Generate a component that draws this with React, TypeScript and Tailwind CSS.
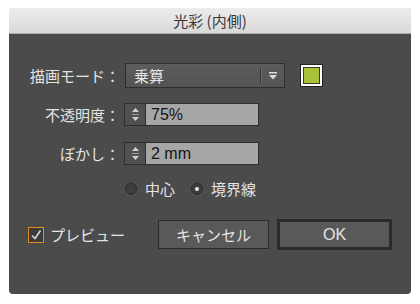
import React, { useState } from 'react';

const jp = { fontFamily: '"Noto Sans CJK JP", "Noto Sans", sans-serif' };
const latin = { fontFamily: '"Liberation Sans", "Noto Sans CJK JP", sans-serif' };

const Spinner: React.FC = () => (
    <div className="w-[21px] h-full flex flex-col items-center justify-center bg-[#505050] border-r border-[#2e2e2e]">
        <svg width="9" height="15" viewBox="0 0 9 15">
            <polygon points="4.5,1 8,5 1,5" fill="#d0d0d0" />
            <line x1="1" y1="7.5" x2="8" y2="7.5" stroke="#9a9a9a" strokeWidth="1" />
            <polygon points="1,10 8,10 4.5,14" fill="#d0d0d0" />
        </svg>
    </div>
);

const NumberField: React.FC<{ value: string }> = ({ value }) => (
    <div className="flex h-[23px] w-[135px] border border-[#2e2e2e] bg-[#a6a6a6]">
        <Spinner />
        <div className="flex-1 flex items-center pl-[5px] text-[16px] text-[#141414]" style={latin}>
            {value}
        </div>
    </div>
);

const Radio: React.FC<{ checked?: boolean; label: string }> = ({ checked, label }) => (
    <div className="flex items-center gap-[8px]">
        <div className="w-[12px] h-[12px] rounded-full bg-[#3e3e3e] border border-[#2a2a2a] flex items-center justify-center shadow-[0_1px_0_#5a5a5a]">
            {checked && <div className="w-[4px] h-[4px] rounded-full bg-[#e6e6e6]" />}
        </div>
        <span className="text-[15px] text-[#e4e4e4] leading-none" style={jp}>{label}</span>
    </div>
);

export default function App() {
    const [preview, setPreview] = useState(true);

    return (
        <div className="w-[420px] h-[304px] bg-white pt-[8px] pl-[9px]">
            <div className="w-[402px] h-[286px] flex flex-col rounded-b-[4px] overflow-hidden">
                {/* Title bar */}
                <div className="h-[26px] flex items-center justify-center bg-gradient-to-b from-[#ececec] to-[#d9d9d9] border-b border-[#a8a8a8]">
                    <span className="text-[15px] text-[#383838] leading-none" style={jp}>光彩 (内側)</span>
                </div>

                {/* Body */}
                <div className="flex-1 bg-[#4b4b4b] flex flex-col pt-[29px]" style={jp}>
                    {/* Mode */}
                    <div className="flex items-center h-[25px]">
                        <div className="w-[112px] text-right text-[15px] text-[#e4e4e4] leading-none pr-[1px]">描画モード：</div>
                        <div className="ml-[4px] w-[160px] h-[25px] flex items-center border border-[#2e2e2e] bg-gradient-to-b from-[#5c5c5c] to-[#545454]">
                            <span className="flex-1 pl-[8px] text-[15px] text-[#e4e4e4] leading-none">乗算</span>
                            <div className="w-[1px] h-[15px] bg-[#333]" />
                            <div className="w-[1px] h-[15px] bg-[#6e6e6e] mr-[6px]" />
                            <svg width="10" height="8" viewBox="0 0 10 8" className="mr-[6px]">
                                <rect x="1" y="0" width="8" height="1.5" fill="#dcdcdc" />
                                <polygon points="1,3 9,3 5,7.5" fill="#dcdcdc" />
                            </svg>
                        </div>
                        <div className="ml-[15px] w-[23px] h-[23px] border border-[#222] bg-white p-[2px]">
                            <div className="w-full h-full bg-[#a8c23a] border border-[#3a3a3a]" />
                        </div>
                    </div>

                    {/* Opacity */}
                    <div className="flex items-center mt-[15px]">
                        <div className="w-[112px] text-right text-[15px] text-[#e4e4e4] leading-none pr-[1px]">不透明度：</div>
                        <div className="ml-[3px]">
                            <NumberField value="75%" />
                        </div>
                    </div>

                    {/* Blur */}
                    <div className="flex items-center mt-[16px]">
                        <div className="w-[112px] text-right text-[15px] text-[#e4e4e4] leading-none pr-[1px]">ぼかし：</div>
                        <div className="ml-[3px]">
                            <NumberField value="2 mm" />
                        </div>
                    </div>

                    {/* Source */}
                    <div className="flex items-center gap-[16px] mt-[16px] pl-[116px]">
                        <Radio label="中心" />
                        <Radio checked label="境界線" />
                    </div>

                    {/* Footer */}
                    <div className="flex items-center mt-[23px] pl-[19px]">
                        <button
                            onClick={() => setPreview(!preview)}
                            className="flex items-center gap-[6px]"
                        >
                            <div className="w-[16px] h-[16px] border border-[#e08c1c] bg-[#3c3c3c] flex items-center justify-center">
                                {preview && (
                                    <svg width="12" height="12" viewBox="0 0 12 12">
                                        <path d="M2 6.5 L5 9.5 L10.5 1.5" stroke="#d8d8d8" strokeWidth="1.6" fill="none" />
                                    </svg>
                                )}
                            </div>
                            <span className="text-[15px] text-[#e4e4e4] leading-none">プレビュー</span>
                        </button>
                        <button className="ml-[33px] w-[111px] h-[29px] border border-[#2a2a2a] bg-[#595959] text-[15px] text-[#e4e4e4] leading-none">
                            キャンセル
                        </button>
                        <button className="ml-[8px] w-[115px] h-[31px] border-[3px] border-[#2b2b2b] bg-[#595959] text-[16px] text-[#e4e4e4] leading-none" style={latin}>
                            OK
                        </button>
                    </div>
                </div>
            </div>
        </div>
    );
}
